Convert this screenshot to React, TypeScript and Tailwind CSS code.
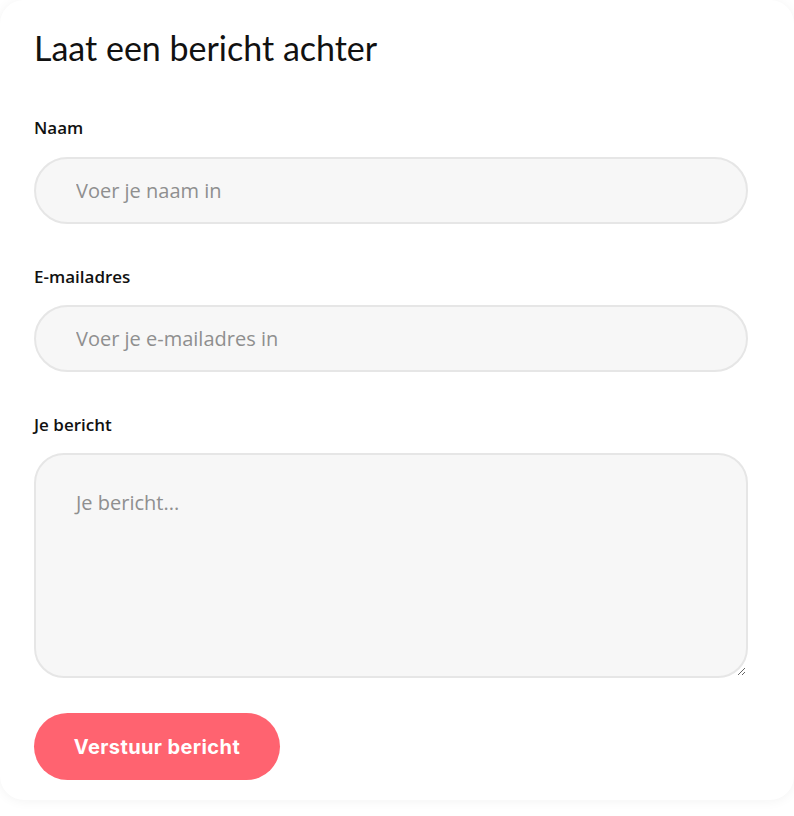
export default function App() {
    return (
        <div className="min-h-screen bg-white">
            <div className="h-[800px] rounded-[24px] bg-white shadow-[0_1px_12px_rgba(0,0,0,0.05)] px-[34px] pt-[28px]">
                <h2 className="font-['Lato',sans-serif] text-[34px] leading-[40px] text-[#111]">Laat een bericht achter</h2>

                <form className="mt-[49px] font-['Open_Sans',sans-serif]" onSubmit={(e) => e.preventDefault()}>
                    <label className="block text-[17px] font-semibold text-[#111] leading-[22px]">Naam</label>
                    <input
                        placeholder="Voer je naam in"
                        className="mt-[18px] block w-[714px] h-[67px] rounded-full border-2 border-[#e6e6e6] bg-[#f7f7f7] px-[40px] text-[20px] text-[#333] placeholder:text-[#8f8f8f] focus:outline-none"
                    />

                    <label className="mt-[42px] block text-[17px] font-semibold text-[#111] leading-[22px]">E-mailadres</label>
                    <input
                        placeholder="Voer je e-mailadres in"
                        className="mt-[17px] block w-[714px] h-[67px] rounded-full border-2 border-[#e6e6e6] bg-[#f7f7f7] px-[40px] text-[20px] text-[#333] placeholder:text-[#8f8f8f] focus:outline-none"
                    />

                    <label className="mt-[42px] block text-[17px] font-semibold text-[#111] leading-[22px]">Je bericht</label>
                    <textarea
                        placeholder="Je bericht..."
                        className="mt-[17px] block w-[714px] h-[225px] rounded-[30px] border-2 border-[#e6e6e6] bg-[#f7f7f7] px-[40px] pt-[34px] text-[20px] leading-[28px] text-[#333] placeholder:text-[#8f8f8f] focus:outline-none"
                    />

                    <button
                        type="submit"
                        className="mt-[35px] w-[246px] h-[67px] rounded-full bg-[#ff6370] text-white text-[20px] tracking-[0.4px] font-bold font-['Inter',sans-serif]"
                    >
                        Verstuur bericht
                    </button>
                </form>
            </div>
        </div>
    );
}
